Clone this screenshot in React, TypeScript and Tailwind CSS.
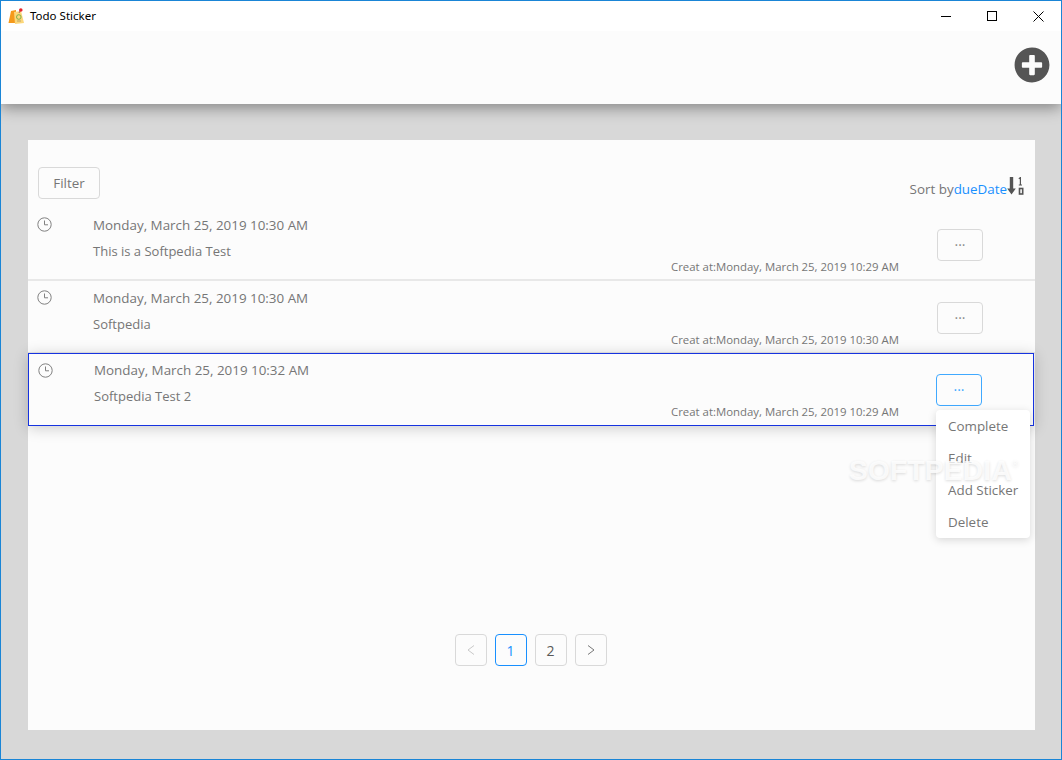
import React from 'react';
import { FaPlusCircle } from 'react-icons/fa';

const todos = [
  { due: 'Monday, March 25, 2019 10:30 AM', title: 'This is a Softpedia Test', created: 'Monday, March 25, 2019 10:29 AM' },
  { due: 'Monday, March 25, 2019 10:30 AM', title: 'Softpedia', created: 'Monday, March 25, 2019 10:30 AM' },
  { due: 'Monday, March 25, 2019 10:32 AM', title: 'Softpedia Test 2', created: 'Monday, March 25, 2019 10:29 AM' },
];

const menuItems = ['Complete', 'Edit', 'Add Sticker', 'Delete'];

const AppLogo = () => (
  <svg width="17" height="17" viewBox="0 0 17 17">
    <path d="M3 3 L8 2 L8 15 L0.5 15 Z" fill="#f59a1c" />
    <path d="M6 4 L13 3 L16 15 L7 16 Z" fill="#fcd77a" />
    <circle cx="10.8" cy="9" r="2.3" fill="none" stroke="#7fb04a" strokeWidth="1" />
    <path d="M9 13 H13" stroke="#b9a26a" strokeWidth="1" />
    <path d="M11 5 L12.5 2" stroke="#a66" strokeWidth="1" />
    <circle cx="12.8" cy="2" r="1.8" fill="#e8262c" />
  </svg>
);

const ClockIcon = () => (
  <svg width="15" height="15" viewBox="0 0 15 15" fill="none" stroke="#808080" strokeWidth="1">
    <circle cx="7.5" cy="7.5" r="6.7" />
    <path d="M7.5 3.5 V7.8 H11" />
  </svg>
);

const SortIcon = () => (
  <svg width="18" height="18" viewBox="0 0 18 18" className="-mt-[6px]">
    <path d="M2.8 0 H6.2 V11.5 H8.8 L4.5 17.5 L0.2 11.5 H2.8 Z" fill="#555555" />
    <path d="M11.8 1.8 L13.4 0.6 V8 M11.8 8 H15" fill="none" stroke="#555555" strokeWidth="1.2" />
    <rect x="12.5" y="11.5" width="3.2" height="5.5" fill="none" stroke="#555555" strokeWidth="1.6" />
  </svg>
);

const WindowControls = () => (
  <div className="flex items-center">
    <div className="w-[46px] h-[30px] flex items-center justify-center">
      <div className="w-[10px] h-px bg-black" />
    </div>
    <div className="w-[46px] h-[30px] flex items-center justify-center">
      <div className="w-[10px] h-[10px] border border-black" />
    </div>
    <div className="w-[46px] h-[30px] flex items-center justify-center">
      <svg width="11" height="11" viewBox="0 0 11 11" stroke="#000" strokeWidth="1">
        <path d="M0.5 0.5 L10.5 10.5 M10.5 0.5 L0.5 10.5" />
      </svg>
    </div>
  </div>
);

const MoreButton = ({ active }: { active?: boolean }) => (
  <button
    className={`w-[46px] h-[32px] rounded border bg-[#fcfcfc] text-[14px] leading-none flex items-center justify-center ${
      active ? 'border-[#40a9ff] text-[#40a9ff]' : 'border-[#d9d9d9] text-[#8a8a8a]'
    }`}
  >
    ···
  </button>
);

const PageButton = ({ children, active }: { children: React.ReactNode; active?: boolean }) => (
  <div
    className={`w-[32px] h-[32px] rounded border flex items-center justify-center text-[14px] ${
      active ? 'border-[#1890ff] text-[#1890ff]' : 'border-[#d9d9d9] text-[#595959]'
    }`}
  >
    {children}
  </div>
);

export default function App() {
  return (
    <div
      className="relative w-[1062px] h-[760px] overflow-hidden border border-[#1a85d6] bg-[#d8d8d8] flex flex-col text-[#767676]"
      style={{ fontFamily: '"Open Sans", "Noto Sans", sans-serif' }}
    >
      {/* Title bar */}
      <div className="relative z-20 h-[30px] shrink-0 bg-white flex items-center justify-between">
        <div className="flex items-center pl-[7px] gap-[5px]">
          <AppLogo />
          <span className="text-[11.5px] text-black" style={{ fontFamily: '"Noto Sans", sans-serif' }}>Todo Sticker</span>
        </div>
        <WindowControls />
      </div>

      {/* Header */}
      <div className="h-[73px] shrink-0 bg-[#fcfcfc] flex justify-end items-start pt-[16px] pr-[11px] shadow-[0_4px_14px_rgba(0,0,0,0.38)] z-10">
        <FaPlusCircle size={36} color="#555555" />
      </div>

      {/* Main panel */}
      <div className="flex-1 flex flex-col pt-[36px] pl-[27px] pr-[26px] pb-[29px]">
        <div className="flex-1 flex flex-col bg-[#fcfcfc] pb-[64px]">
          <div className="h-[68px] shrink-0 flex items-end justify-between pl-[10px] pr-[10px]">
            <button className="w-[62px] h-[32px] mb-[9px] pt-[1px] rounded border border-[#d9d9d9] text-[13.4px] text-[#767676]">
              Filter
            </button>
            <div className="flex items-center text-[13.4px] mb-[9px]">
              <span>Sort by</span>
              <span className="text-[#1890ff]">dueDate</span>
              <SortIcon />
            </div>
          </div>

          {todos.map((todo, i) => {
            const selected = i === 2;
            return (
              <div
                key={i}
                className={`relative flex items-start h-[73px] pl-[9px] ${
                  selected
                    ? '-mt-px mr-px pr-[51px] border border-[#1633e0] shadow-[0_2px_14px_rgba(0,0,0,0.2)] pt-[7px]'
                    : 'pr-[52px] border-b-2 border-[#e8e8e8] pt-[8px]'
                }`}
              >
                <div className={`w-[56px] shrink-0 ${selected ? 'pt-[2px]' : 'pt-[1px]'}`}>
                  <ClockIcon />
                </div>
                <div className="flex-1">
                  <div className="text-[13.4px] leading-[18px]">{todo.due}</div>
                  <div className="text-[13px] leading-[18px] mt-[8px]">{todo.title}</div>
                </div>
                <div className={`self-end text-[11.4px] leading-[16px] ${selected ? 'mr-[37px] mb-[5px]' : 'mr-[38px] mb-[4px]'}`}>
                  Creat at:{todo.created}
                </div>
                <div className="mt-[13px]">
                  <MoreButton active={selected} />
                </div>

                {selected && (
                  <div className="absolute left-[907px] top-[56px] w-[94px] z-20 rounded bg-white pl-[12px] shadow-[0_2px_8px_rgba(0,0,0,0.15)]">
                    {menuItems.map((item) => (
                      <div key={item} className="h-[32px] flex items-center text-[13.4px] text-[#767676] whitespace-nowrap">
                        {item}
                      </div>
                    ))}
                  </div>
                )}
              </div>
            );
          })}

          <div className="mt-auto flex justify-center gap-[8px] pr-[2px]">
            <PageButton>
              <svg width="8" height="10" viewBox="0 0 8 10" fill="none" stroke="#c8c8c8"><path d="M7 0.5 L1 5 L7 9.5" /></svg>
            </PageButton>
            <PageButton active>1</PageButton>
            <PageButton>2</PageButton>
            <PageButton>
              <svg width="8" height="10" viewBox="0 0 8 10" fill="none" stroke="#777777"><path d="M1 0.5 L7 5 L1 9.5" /></svg>
            </PageButton>
          </div>
        </div>
      </div>

      {/* Softpedia watermark */}
      <div className="absolute left-[848px] top-[453px] z-30 text-[28px] leading-[34px] font-bold text-white/80 tracking-[0.3px] [text-shadow:0_1px_3px_rgba(0,0,0,0.14)] pointer-events-none whitespace-nowrap" style={{ fontFamily: '"Liberation Sans", sans-serif' }}>
        SOFTPEDIA<span className="align-top text-[9px] leading-[20px] font-normal">®</span>
      </div>
    </div>
  );
}
